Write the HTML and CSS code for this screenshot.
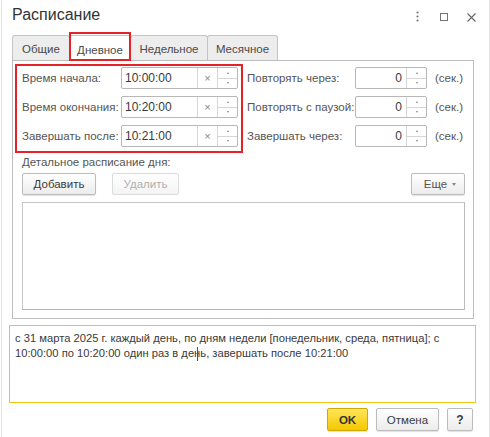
FILE: index.html
```html
<!DOCTYPE html>
<html lang="ru">
<head>
<meta charset="utf-8">
<title>Расписание</title>
<link rel="stylesheet" href="styles.css">
</head>
<body>
<div class="window">
  <header class="titlebar">
    <h1 class="title">Расписание</h1>
    <div class="win-actions">
      <svg class="ic-more" width="3" height="11" viewBox="0 0 3 11"><circle cx="1.5" cy="1.5" r="1.1" fill="#777"/><circle cx="1.5" cy="5.5" r="1.1" fill="#777"/><circle cx="1.5" cy="9.5" r="1.1" fill="#777"/></svg>
      <svg class="ic-max" width="9" height="9" viewBox="0 0 9 9"><rect x="0.5" y="0.5" width="8" height="8" fill="none" stroke="#666" stroke-width="1"/></svg>
      <svg class="ic-close" width="9" height="9" viewBox="0 0 9 9"><path d="M0.5 0.5 L8.5 8.5 M8.5 0.5 L0.5 8.5" stroke="#666" stroke-width="1.1" fill="none"/></svg>
    </div>
  </header>

  <nav class="tabs">
    <div class="tab tab-w1">Общие</div>
    <div class="tab tab-w2 active">Дневное</div>
    <div class="tab tab-w3">Недельное</div>
    <div class="tab tab-w4">Месячное</div>
  </nav>

  <section class="panel">
    <div class="fields">
      <div class="group group-left">
        <div class="row">
          <span class="label">Время начала:</span>
          <div class="time-input">
            <span class="value">10:00:00</span>
            <span class="clear">×</span>
            <span class="spin"><span class="up"></span><span class="down"></span></span>
          </div>
        </div>
        <div class="row">
          <span class="label">Время окончания:</span>
          <div class="time-input">
            <span class="value">10:20:00</span>
            <span class="clear">×</span>
            <span class="spin"><span class="up"></span><span class="down"></span></span>
          </div>
        </div>
        <div class="row">
          <span class="label">Завершать после:</span>
          <div class="time-input">
            <span class="value">10:21:00</span>
            <span class="clear">×</span>
            <span class="spin"><span class="up"></span><span class="down"></span></span>
          </div>
        </div>
      </div>
      <div class="group group-right">
        <div class="row">
          <span class="label label-r">Повторять через:</span>
          <div class="num-input"><span class="value num">0</span><span class="spin"><span class="up"></span><span class="down"></span></span></div>
          <span class="unit">(сек.)</span>
        </div>
        <div class="row">
          <span class="label label-r">Повторять с паузой:</span>
          <div class="num-input"><span class="value num">0</span><span class="spin"><span class="up"></span><span class="down"></span></span></div>
          <span class="unit">(сек.)</span>
        </div>
        <div class="row">
          <span class="label label-r">Завершать через:</span>
          <div class="num-input"><span class="value num">0</span><span class="spin"><span class="up"></span><span class="down"></span></span></div>
          <span class="unit">(сек.)</span>
        </div>
      </div>
    </div>

    <div class="detail">
      <div class="detail-label">Детальное расписание дня:</div>
      <div class="toolbar">
        <button class="btn btn-add">Добавить</button>
        <button class="btn btn-del" disabled>Удалить</button>
        <button class="btn btn-more">Еще <span class="caret"></span></button>
      </div>
      <div class="grid"></div>
    </div>
  </section>

  <div class="summary">с 31 марта 2025 г. каждый день, по дням недели [понедельник, среда, пятница]; с 10:00:00 по 10:20:00 один раз в <span class="caret-word">день</span>, завершать после 10:21:00</div>

  <footer class="footer">
    <button class="btn btn-ok">OK</button>
    <button class="btn btn-cancel">Отмена</button>
    <button class="btn btn-help">?</button>
  </footer>
</div>
</body>
</html>
```

FILE: styles.css
```css
html, body {
  margin: 0;
  padding: 0;
  background: #fff;
}
body {
  width: 490px;
  height: 437px;
  overflow: hidden;
  font-family: "Liberation Sans", Arial, sans-serif;
  font-size: 11.5px;
  color: #555;
}
.window {
  box-sizing: border-box;
  width: 489px;
  height: 437px;
  margin-left: 1px;
  border-left: 1px solid #e3e3e3;
  border-right: 1px solid #e3e3e3;
  padding: 0 13px 0 7px;
  display: flex;
  flex-direction: column;
}

/* title bar */
.titlebar {
  height: 35px;
  display: flex;
  align-items: flex-start;
}
.title {
  margin: 3px 0 0 3px;
  font-size: 16px;
  line-height: 24px;
  font-weight: normal;
  color: #333;
}
.win-actions {
  margin-left: auto;
  display: flex;
  align-items: center;
  height: 11px;
  margin-top: 11px;
}
.ic-more { margin-right: 21px; }
.ic-max { margin-right: 19px; margin-top: 1px; width: 8px; height: 8px; }
.ic-close { margin-top: 1px; }

/* tabs */
.tabs {
  display: flex;
  margin-left: 3px;
  height: 25px;
  position: relative;
  z-index: 2;
}
.tab {
  box-sizing: border-box;
  height: 25px;
  border: 1px solid #c4c4c4;
  border-bottom: none;
  border-radius: 3px 3px 0 0;
  background: #ededed;
  color: #4a4a4a;
  display: flex;
  align-items: center;
  justify-content: center;
  padding-top: 2px;
}
.tab + .tab { margin-left: -1px; }
.tab-w1 { width: 58px; }
.tab-w2 { width: 62px; }
.tab-w3 { width: 78px; }
.tab-w4 { width: 71px; }
.tab.active {
  background: #fff;
  height: 26px;
  position: relative;
}
.tab.active::after {
  content: "";
  position: absolute;
  top: -4px;
  left: -1px;
  right: -1px;
  bottom: 0;
  border: 2px solid #e42328;
}

/* panel */
.panel {
  box-sizing: border-box;
  margin: 0 2px 0 3px;
  border: 1px solid #bdbdbd;
  padding: 3px 8px 8px 2px;
  display: flex;
  flex-direction: column;
}
.fields {
  display: flex;
  align-items: flex-start;
}
.group {
  display: flex;
  flex-direction: column;
  gap: 7px;
}
.group-left {
  box-sizing: border-box;
  width: 228px;
  border: 2px solid #e42328;
  padding: 1px 3px 4px 5px;
}
.group-right {
  margin-left: 4px;
  padding-top: 3px;
}
.row {
  display: flex;
  align-items: center;
  height: 22px;
}
.label {
  flex: 1;
  white-space: nowrap;
  color: #555;
}
.label-r {
  flex: none;
  width: 108px;
}
.time-input, .num-input {
  box-sizing: border-box;
  height: 22px;
  border: 1px solid #b8b8b8;
  border-radius: 2px;
  display: flex;
  background: #fff;
  color: #3a3a3a;
}
.time-input { width: 117px; }
.num-input { width: 72px; }
.value {
  flex: 1;
  display: flex;
  align-items: center;
  padding-left: 3px;
  font-size: 12px;
}
.value.num {
  justify-content: flex-end;
  padding: 0 4px 0 0;
}
.clear {
  width: 19px;
  border-left: 1px solid #d6d6d6;
  display: flex;
  align-items: center;
  justify-content: center;
  color: #888;
  font-size: 11px;
}
.spin {
  width: 19px;
  border-left: 1px solid #d6d6d6;
  display: flex;
  flex-direction: column;
}
.spin .up, .spin .down {
  flex: 1;
  display: flex;
  align-items: center;
  justify-content: center;
}
.spin .up { border-bottom: 1px solid #d6d6d6; }
.spin .up::before {
  content: "";
  border-left: 1.5px solid transparent;
  border-right: 1.5px solid transparent;
  border-bottom: 2px solid #888;
}
.spin .down::before {
  content: "";
  border-left: 1.5px solid transparent;
  border-right: 1.5px solid transparent;
  border-top: 2px solid #888;
}
.unit {
  margin-left: 8px;
  white-space: nowrap;
}

/* detail */
.detail {
  margin-left: 7px;
  display: flex;
  flex-direction: column;
}
.detail-label {
  margin-top: 2px;
  line-height: 14px;
}
.toolbar {
  margin-top: 4px;
  display: flex;
  align-items: center;
}
.btn {
  box-sizing: border-box;
  height: 22px;
  font-family: "Liberation Sans", Arial, sans-serif;
  font-size: 11.5px;
  color: #3a3a3a;
  border: 1px solid #bcbcbc;
  border-radius: 2px;
  background: linear-gradient(#ffffff, #ececec);
  box-shadow: 0 1px 1px rgba(0,0,0,0.12);
  padding: 0;
  display: inline-flex;
  align-items: center;
  justify-content: center;
}
.btn-add { width: 74px; }
.btn-del {
  width: 67px;
  margin-left: 16px;
  color: #b0b0b0;
  border-color: #dcdcdc;
  background: linear-gradient(#ffffff, #f4f4f4);
  box-shadow: none;
}
.btn-more {
  width: 54px;
  margin-left: auto;
  gap: 5px;
  padding-left: 4px;
  color: #555;
}
.caret {
  border-left: 2.5px solid transparent;
  border-right: 2.5px solid transparent;
  border-top: 3px solid #888;
  margin-top: 1px;
}
.grid {
  box-sizing: border-box;
  margin-top: 7px;
  height: 108px;
  border: 1px solid #c6c6c6;
  border-right-color: #bdbdbd;
  border-bottom-color: #b5b5b5;
}

/* summary */
.summary {
  box-sizing: border-box;
  margin-top: 6px;
  height: 78px;
  border: 1px solid #f3c416;
  padding: 5px 6px 0 5px;
  line-height: 15px;
  font-size: 11.2px;
  color: #3a3a3a;
}
.caret-word {
  position: relative;
}
.caret-word::after {
  content: "";
  position: absolute;
  left: 62%;
  top: 0;
  height: 14px;
  border-left: 1px solid #1d4fd0;
}

/* footer */
.footer {
  margin-top: 5px;
  margin-right: 3px;
  display: flex;
  justify-content: flex-end;
  gap: 8px;
}
.btn-ok {
  width: 41px;
  height: 23px;
  font-weight: bold;
  color: #333;
  border-color: #d1a900;
  background: linear-gradient(#ffe55a, #f5c800);
}
.btn-cancel {
  width: 63px;
  height: 23px;
}
.btn-help {
  width: 26px;
  height: 23px;
  font-weight: bold;
  font-size: 12px;
}
```
